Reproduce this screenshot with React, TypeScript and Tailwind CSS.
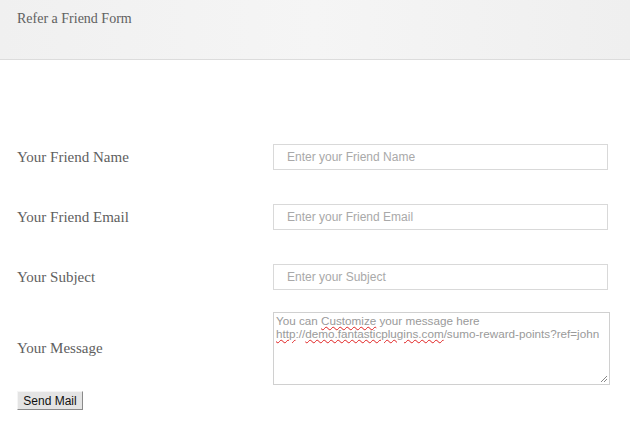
const serif = "font-['Liberation_Serif','DejaVu_Serif',serif]";

const Field = ({ label, placeholder }: { label: string; placeholder: string }) => (
  <div className="flex h-[26px] items-center">
    <label className={`w-[256px] text-[15px] text-[#606060] ${serif}`}>{label}</label>
    <input
      placeholder={placeholder}
      className="h-[26px] w-[335px] border border-[#d9d9d9] bg-white pl-[13px] font-['Liberation_Sans',Arial,sans-serif] text-[12px] text-[#555] outline-none placeholder:text-[#a9a9a9]"
    />
  </div>
);

const Wavy = ({ children }: { children: string }) => (
  <span className="underline decoration-[#e02020] decoration-wavy decoration-1 underline-offset-[1px]">
    {children}
  </span>
);

export default function App() {
  return (
    <div className="h-[434px] w-[630px] overflow-hidden bg-white">
      <div className="h-[60px] border-b border-[#dcdcdc] bg-gradient-to-r from-[#f0f0f0] via-[#f5f5f5] to-[#efefef] px-[17px] pt-[9px]">
        <h1 className={`text-[14px] leading-[20px] text-[#606060] ${serif}`}>Refer a Friend Form</h1>
      </div>

      <form className="flex flex-col px-[17px] pt-[84px]" onSubmit={(e) => e.preventDefault()}>
        <div className="flex flex-col gap-[34px]">
          <Field label="Your Friend Name" placeholder="Enter your Friend Name" />
          <Field label="Your Friend Email" placeholder="Enter your Friend Email" />
          <Field label="Your Subject" placeholder="Enter your Subject" />
        </div>

        <div className="mt-[22px] flex items-center">
          <label className={`w-[256px] text-[15px] text-[#606060] ${serif}`}>Your Message</label>
          <div className="relative h-[73px] w-[337px] border border-[#d0d0d0] bg-white px-[2px] pt-[1px] font-['Liberation_Sans',Arial,sans-serif] text-[11.7px] leading-[13px] whitespace-nowrap text-[#9a9a9a]">
            <div>
              You can <Wavy>Customize</Wavy> your message here
            </div>
            <div>
              <Wavy>http</Wavy>://<Wavy>demo.fantasticplugins.com</Wavy>/sumo-reward-points?ref=john
            </div>
            <svg className="absolute bottom-[1px] right-[1px]" width="8" height="8" viewBox="0 0 8 8">
              <path d="M7 1 L1 7 M7 4 L4 7" stroke="#888" strokeWidth="1" />
            </svg>
          </div>
        </div>

        <button
          type="submit"
          className="mt-[6px] block h-[19px] w-[66px] border border-t-[#f5f5f5] border-l-[#f5f5f5] border-r-[#8a8a8a] border-b-[#8a8a8a] bg-[#e4e4e4] font-['Liberation_Sans',Arial,sans-serif] text-[12px] leading-[16px] text-[#111]"
        >
          Send Mail
        </button>
      </form>
    </div>
  );
}
